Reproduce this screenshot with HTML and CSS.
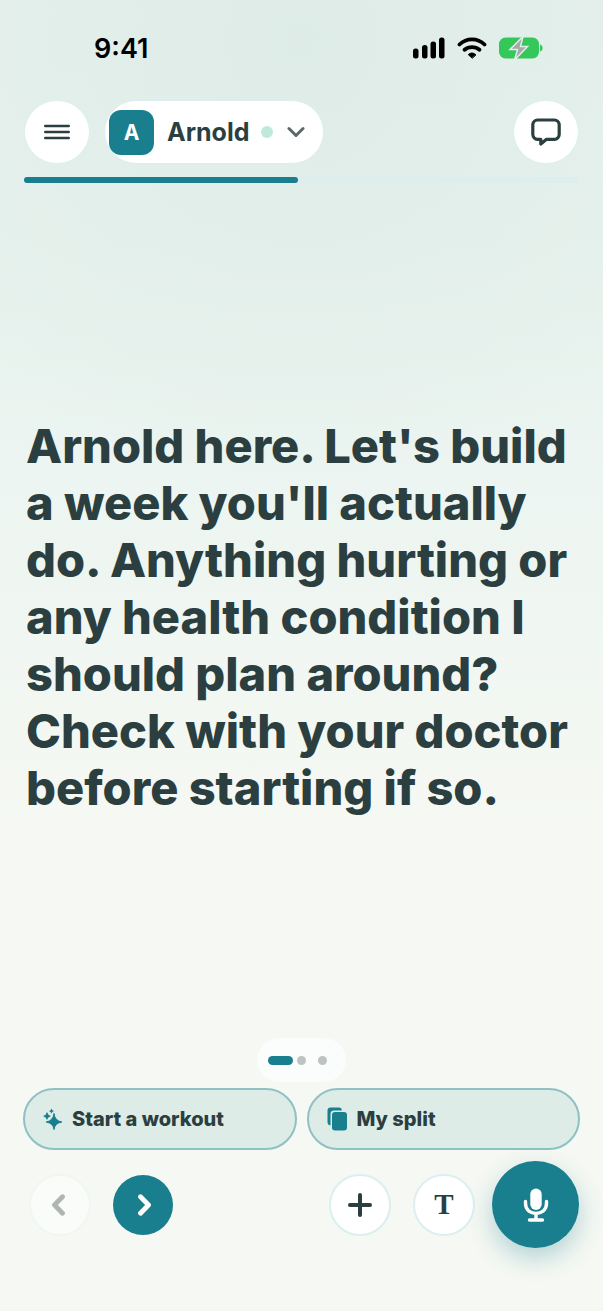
FILE: index.html
```html
<!DOCTYPE html>
<html lang="en">
<head>
    <meta charset="UTF-8">
    <meta name="viewport" content="width=device-width, initial-scale=1.0">
    <title>Arnold</title>
    <link rel="stylesheet" href="styles.css">
</head>
<body>

    <!-- Status bar -->
    <div class="status-bar">
        <span class="time">9:41</span>
        <div class="status-icons">
            <svg width="32" height="22" viewBox="0 0 32 22">
                <rect x="0" y="11.500" width="5.500" height="10" rx="2.500"/>
                <rect x="9" y="8" width="5.500" height="13.500" rx="2.500"/>
                <rect x="17.500" y="4.500" width="5.500" height="17" rx="2.500"/>
                <rect x="26" y="0.500" width="5.500" height="21" rx="2.500"/>
            </svg>
            <svg width="30" height="22" viewBox="0 0 30 22" fill="none" stroke="#000" stroke-width="3.800" stroke-linecap="round">
                <path d="M2.500 7.500C9.500 0.700 20.500 0.700 27.500 7.500"/>
                <path d="M7.500 12.800C11.700 9.200 18.300 9.200 22.500 12.800"/>
                <path d="M15 21L11.300 17.700C13 15.500 17 15.500 18.700 17.700Z" fill="#000" stroke-width="1" stroke-linejoin="round"/>
            </svg>
            <svg width="44" height="22" viewBox="0 0 44 22">
                <rect x="0" y="0.500" width="40" height="21" rx="6.500" fill="#34c759"/>
                <path d="M41 7.500C44.500 8.500 44.500 13.500 41 14.500Z" fill="#34c759"/>
                <path d="M24 -0.500L11 12.500H18.500L15.500 23L28.500 9.500H21.500Z" fill="#a3aaa7" stroke="#e2eeea" stroke-width="1.500"/>
            </svg>
        </div>
    </div>

    <!-- Header -->
    <header class="header">
        <button class="round-btn" aria-label="Menu">
            <svg width="26" height="16" viewBox="0 0 26 16" stroke="#2c3f40" stroke-width="2.600" stroke-linecap="round">
                <path d="M1.300 2H24.700M1.300 8H24.700M1.300 14H24.700"/>
            </svg>
        </button>
        <button class="coach">
            <span class="avatar">A</span>
            <span class="coach-name">Arnold</span>
            <span class="online"></span>
            <svg width="18" height="12" viewBox="0 0 18 12" fill="none" stroke="#5b6968" stroke-width="3" stroke-linecap="round" stroke-linejoin="round">
                <path d="M2 2.500L9 9.500L16 2.500"/>
            </svg>
        </button>
        <button class="round-btn chat" aria-label="Chat">
            <svg width="30" height="28" viewBox="0 0 30 28" fill="none" stroke="#2c3f40" stroke-width="3.200" stroke-linecap="round" stroke-linejoin="round">
                <path d="M6.500 2H23.500A5 5 0 0 1 28.200 6.500V16.500A5 5 0 0 1 23.500 21.300H15.500L9.800 26V21.300H6.500A5 5 0 0 1 1.800 16.500V6.500A5 5 0 0 1 6.500 2Z"/>
            </svg>
        </button>
    </header>
    <div class="progress">
        <div class="progress-fill"></div>
    </div>

    <!-- Message -->
    <main class="message">
        <p>Arnold here. Let's build a week you'll actually do. Anything hurting or any health condition I should plan around? Check with your doctor before starting if so.</p>
    </main>

    <!-- Page dots -->
    <div class="dots">
        <span class="dot active"></span>
        <span class="dot"></span>
        <span class="dot last"></span>
    </div>

    <!-- Quick actions -->
    <div class="actions">
        <button class="action">
            <svg width="19" height="22" viewBox="0 0 19 22" fill="#197f8f">
                <path d="M11 5.500Q11.800 12.800 18.800 14Q11.800 15.200 11 21.500Q10.200 15.200 3.200 14Q10.200 12.800 11 5.500Z" stroke="#197f8f"/>
                <path d="M4 4Q4.800 7.200 8 8Q4.800 8.800 4 12Q3.200 8.800 0 8Q3.200 7.200 4 4Z"/>
                <path d="M8.500 0.500Q9 2.500 11 3Q9 3.500 8.500 5.500Q8 3.500 6 3Q8 2.500 8.500 0.500Z"/>
            </svg>
            Start a workout
        </button>
        <button class="action">
            <svg width="20" height="24" viewBox="0 0 20 24" fill="#197f8f">
                <path d="M3.500 0.500H12Q14.500 0.500 15 3.500H7Q3.500 3.500 3.500 7V18.500Q0.500 18 0.500 15V3.500Q0.500 0.500 3.500 0.500Z"/>
                <rect x="5" y="5" width="15" height="18.500" rx="3"/>
            </svg>
            My split
        </button>
    </div>

    <!-- Bottom controls -->
    <div class="controls">
        <button class="control prev" aria-label="Previous" disabled>
            <svg width="18" height="22" viewBox="0 0 18 22" fill="none" stroke="#afb5b3" stroke-width="4.800" stroke-linecap="round" stroke-linejoin="round">
                <path d="M11.500 2.800L3.500 11L11.500 19.200"/>
            </svg>
        </button>
        <button class="control next" aria-label="Next">
            <svg width="18" height="22" viewBox="0 0 18 22" fill="none" stroke="#fff" stroke-width="4.800" stroke-linecap="round" stroke-linejoin="round">
                <path d="M6.500 2.800L14.500 11L6.500 19.200"/>
            </svg>
        </button>
        <button class="control plus" aria-label="Add">
            <svg width="24" height="24" viewBox="0 0 24 24" stroke="#2c3f40" stroke-width="4" stroke-linecap="round">
                <path d="M12 2V22M2 12H22"/>
            </svg>
        </button>
        <button class="control type" aria-label="Type a message">T</button>
        <button class="mic" aria-label="Speak">
            <svg width="26" height="34" viewBox="0 0 26 34" fill="none" stroke="#fff" stroke-width="3.400" stroke-linecap="round">
                <rect x="7.300" y="0.500" width="11.400" height="21.500" rx="5.700" fill="#fff" stroke="none"/>
                <path d="M2.500 13.500V15.500C2.500 28.800 23.500 28.800 23.500 15.500V13.500M13 26V31M6.500 32H19.500"/>
            </svg>
        </button>
    </div>

</body>
</html>
```

FILE: styles.css
```css
* {
    box-sizing: border-box;
}
body {
    margin: 0;
    min-height: 100vh;
    display: flex;
    flex-direction: column;
    font-family: Inter, "Liberation Sans", sans-serif;
    color: #2c3f40;
    background: radial-gradient(ellipse 70% 36% at 50% 3%, rgba(218, 233, 228, 0.6), rgba(230, 240, 236, 0)),
        linear-gradient(#e5f0ec, #e6f1ec 18%, #ecf5f1 36%, #f5f8f3 62%);
}
button {
    font-family: inherit;
    color: inherit;
    padding: 0;
    border: none;
    cursor: pointer;
}
svg {
    display: block;
    flex-shrink: 0;
}
.status-bar {
    display: flex;
    justify-content: space-between;
    align-items: center;
    height: 100px;
    padding: 0 60px 4px 94px;
    color: #000;
}
.time {
    font-size: 27px;
    font-weight: 600;
}
.status-icons {
    display: flex;
    gap: 12px;
}
.header {
    display: flex;
    gap: 14px;
    padding: 0 24px;
}
.round-btn {
    display: flex;
    align-items: center;
    justify-content: center;
    width: 66px;
    height: 64px;
    border: 1px solid #dceff0;
    border-radius: 50%;
    background: #fff;
}
.chat {
    margin-left: auto;
}
.coach {
    display: flex;
    align-items: center;
    height: 64px;
    padding: 0 18px 0 4px;
    border: 1px solid #dceff0;
    border-radius: 32px;
    background: #fff;
}
.avatar {
    width: 45px;
    height: 45px;
    margin-right: 13px;
    border-radius: 12px;
    background: #197f8f;
    color: #fff;
    font-size: 21px;
    font-weight: 700;
    line-height: 45px;
}
.coach-name {
    font-size: 25px;
    font-weight: 700;
}
.online {
    width: 12px;
    height: 12px;
    margin: 0 14px 0 12px;
    border-radius: 50%;
    background: #bfe9d8;
}
.progress {
    height: 6px;
    margin: 13px 24px 0;
    border-radius: 3px;
    background: #dceeed;
}
.progress-fill {
    width: 49.4%;
    height: 6px;
    border-radius: 3px;
    background: #197f8f;
}
.message {
    flex: 1;
    display: flex;
    align-items: center;
    padding: 12px 26px 0;
}
.message p {
    margin: 0;
    font-size: 47px;
    font-weight: 800;
    line-height: 57px;
}
.dots {
    display: flex;
    align-items: center;
    align-self: center;
    height: 44px;
    padding: 0 19px 0 11px;
    border-radius: 22px;
    background: #fbfdfc;
}
.dot {
    width: 9px;
    height: 9px;
    margin-left: 4px;
    border-radius: 5px;
    background: #bdc3c1;
}
.dot.active {
    width: 25px;
    margin-left: 0;
    background: #197f8f;
}
.dot.last {
    margin-left: 12px;
}
.actions {
    display: grid;
    grid-template-columns: 1fr 1fr;
    gap: 10px;
    padding: 6px 23px 11px;
}
.action {
    display: flex;
    align-items: center;
    gap: 10px;
    height: 62px;
    padding: 0 18px;
    border: 2px solid #8fc0c3;
    border-radius: 31px;
    background: #deece7;
    font-size: 20px;
    font-weight: 800;
}
.controls {
    display: flex;
    align-items: center;
    gap: 22px;
    padding: 0 24px 63px 29px;
}
.control {
    display: flex;
    align-items: center;
    justify-content: center;
    width: 62px;
    height: 62px;
    border: 2px solid #dceff0;
    border-radius: 50%;
    background: #fff;
}
.prev {
    border-color: #f0f6f3;
    background: #fafcfa;
}
.next {
    width: 60px;
    height: 60px;
    border: none;
    background: #197f8f;
}
.plus {
    margin-left: auto;
}
.type {
    font-family: "Liberation Serif", serif;
    font-size: 29px;
    font-weight: 700;
}
.mic {
    display: flex;
    align-items: center;
    justify-content: center;
    width: 87px;
    height: 87px;
    margin-left: -5px;
    border-radius: 50%;
    background: #197f8f;
    box-shadow: 0 10px 24px rgba(25, 127, 143, 0.3);
}
```
